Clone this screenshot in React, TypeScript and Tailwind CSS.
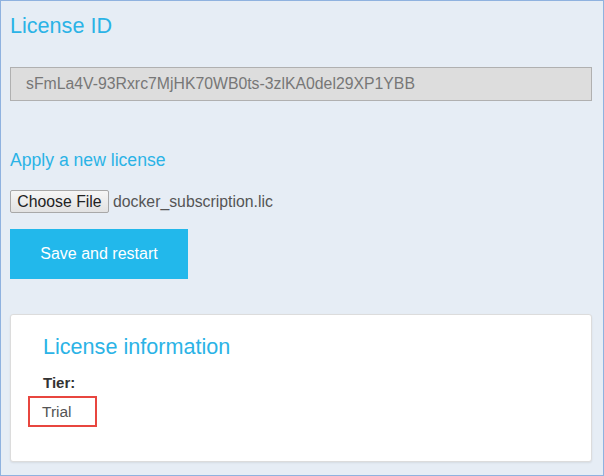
export default function App() {
  return (
    <div
      className="w-[604px] h-[476px] border border-[#8fb2df] bg-[#e6edf5] overflow-hidden"
      style={{ fontFamily: '"Liberation Sans", Arial, sans-serif' }}
    >
      <div className="pl-[9px] pr-[11px] pt-[13px]">
        {/* License ID */}
        <h1 className="text-[21.6px] leading-[24px] text-[#2bb3e6]">License ID</h1>
        <div className="mt-[29px] h-[34px] border border-[#b0b0b0] bg-[#dddddd] flex items-center pl-[15px] text-[15.8px] text-[#777777]">
          sFmLa4V-93Rxrc7MjHK70WB0ts-3zlKA0del29XP1YBB
        </div>

        {/* Apply */}
        <h2 className="mt-[49px] text-[17.6px] leading-[20px] text-[#2bb3e6]">Apply a new license</h2>
        <div className="mt-[20px] flex items-center gap-[4px]">
          <button className="h-[23px] w-[99px] border border-[#a8a8a8] rounded-[2px] bg-gradient-to-b from-[#f6f6f6] to-[#e2e2e2] text-[15.8px] text-[#222] leading-none">
            Choose File
          </button>
          <span className="text-[15.8px] text-[#555]">docker_subscription.lic</span>
        </div>
        <button className="mt-[15px] h-[50px] w-[178px] bg-[#22b8eb] text-white text-[16px]">
          Save and restart
        </button>

        {/* Card */}
        <div className="mt-[35px] h-[148px] bg-white border border-[#dcdcdc] rounded-[3px] shadow-[0_1px_2px_rgba(0,0,0,0.08)] pl-[32px] pt-[20px]">
          <h3 className="text-[21.6px] leading-[24px] text-[#2bb3e6]">License information</h3>
          <div className="mt-[15px] text-[15px] leading-[18px] font-bold text-[#333]">Tier:</div>
          <div className="mt-[4px] -ml-[15px] w-[69px] h-[31px] border-2 border-[#e8463f] flex items-center pl-[12px] text-[15.5px] text-[#555]">
            Trial
          </div>
        </div>
      </div>
    </div>
  );
}
